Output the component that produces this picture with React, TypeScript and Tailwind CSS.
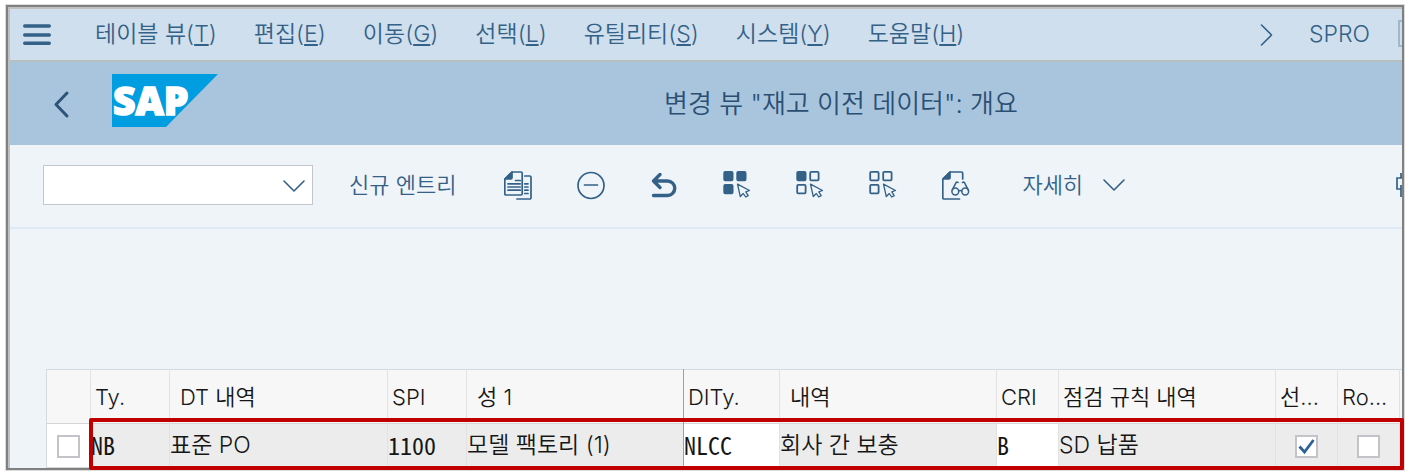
import type { ReactNode } from 'react';
import clsx from 'clsx';

const MENUS = [
  { label: '테이블 뷰', hotkey: 'T' },
  { label: '편집', hotkey: 'E' },
  { label: '이동', hotkey: 'G' },
  { label: '선택', hotkey: 'L' },
  { label: '유틸리티', hotkey: 'S' },
  { label: '시스템', hotkey: 'Y' },
  { label: '도움말', hotkey: 'H' },
];

interface Column {
  label: string;
  width: string;
  pad: string;
  divider: string;
}

const COLUMNS: Column[] = [
  { label: 'Ty.', width: 'w-[79px]', pad: 'pl-1', divider: 'border-[#e2e2e2]' },
  { label: 'DT 내역', width: 'w-[218px]', pad: 'pl-2.5', divider: 'border-[#e2e2e2]' },
  { label: 'SPI', width: 'w-[79px]', pad: 'pl-1', divider: 'border-[#e2e2e2]' },
  { label: '성 1', width: 'w-[217px]', pad: 'pl-2.5', divider: 'border-[#e2e2e2]' },
  { label: 'DITy.', width: 'w-[96px]', pad: 'pl-1', divider: 'border-[#a0a0a0]' },
  { label: '내역', width: 'w-[217px]', pad: 'pl-2.5', divider: 'border-[#e2e2e2]' },
  { label: 'CRI', width: 'w-[62px]', pad: 'pl-1', divider: 'border-[#e2e2e2]' },
  { label: '점검 규칙 내역', width: 'w-[217px]', pad: 'pl-1', divider: 'border-[#e2e2e2]' },
  { label: '선...', width: 'w-[62px]', pad: 'pl-1', divider: 'border-[#e2e2e2]' },
  { label: 'Ro...', width: 'w-[62px]', pad: 'pl-1', divider: 'border-[#e2e2e2]' },
];

function Chevron({ d, className, strokeWidth = 1.6 }: { d: string; className: string; strokeWidth?: number }) {
  return (
    <svg viewBox="0 0 22 22" className={className} fill="none" stroke="currentColor" strokeWidth={strokeWidth} strokeLinecap="round" strokeLinejoin="round">
      <path d={d} />
    </svg>
  );
}

function Logo() {
  return (
    <svg viewBox="0 0 106 53" className="mb-1.5 h-[53px] w-[106px] shrink-0 overflow-visible" role="img" aria-label="SAP">
      <path d="M0 0H106L54 53H0Z" fill="#009de0" />
      <text x="1" y="41" fill="#fff" stroke="#fff" strokeWidth="1.600" fontSize="39" fontWeight="800" fontFamily="Open Sans, sans-serif">
        SAP
      </text>
    </svg>
  );
}

function CopyIcon() {
  return (
    <>
      <path d="M8 1h9a1.2 1.2 0 0 1 1.2 1.200v20.600a1.200 1.200 0 0 1-1.200 1.200H2a1.200 1.200 0 0 1-1.200-1.200V8z" />
      <path d="M1 8 8 1v5.800a1.200 1.200 0 0 1-1.200 1.200z" fill="currentColor" />
      <path d="M11.500 9.500h4.700M4 12.800h12.200M4 16h12.200M4 19.200h12.200M20.800 5h5a1.200 1.200 0 0 1 1.200 1.200v20.600a1.200 1.200 0 0 1-1.200 1.200H13M20.800 12.800h3.200M20.800 16h3.200M20.800 19.200h3.200M20.800 22.500h3.200" />
    </>
  );
}

function MinusIcon() {
  return (
    <>
      <circle cx="14" cy="14.500" r="13" />
      <path d="M7.500 14h13" />
    </>
  );
}

function UndoIcon() {
  return <path d="M10 3.500 3.500 10 10 16.500M3.500 10h14a7 7 0 0 1 0 14.500H3.500" strokeWidth="3.400" />;
}

// filled: number of squares that are solid, in reading order
function SelectIcon({ filled }: { filled: number }) {
  const squares = [[1.2, 0.9], [14.2, 0.9], [1.2, 13.9]];
  return (
    <>
      {squares.map(([x, y], i) => (
        <rect key={i} x={x} y={y} width="8.400" height="8.400" rx="1" fill={i < filled ? 'currentColor' : 'none'} strokeWidth="1.800" />
      ))}
      <path d="M14.500 13.200 26.500 19.500 22.800 20.800 25.200 24.600 22.700 26 20.300 22.500 17.300 25.500Z" strokeWidth="1.300" />
    </>
  );
}

function DetailIcon() {
  return (
    <>
      <path d="M17.500 28H2a1.200 1.200 0 0 1-1.200-1.200V8L8 1h11.500a1.200 1.200 0 0 1 1.200 1.200V8" />
      <path d="M1 8 8 1v5.800a1.200 1.200 0 0 1-1.200 1.200z" fill="currentColor" />
      <g strokeWidth="1.500">
        <circle cx="13.300" cy="20.500" r="3.400" />
        <circle cx="23.200" cy="20.500" r="3.400" />
        <path d="M16.700 20q1.500-1 3 0M10.300 18.800l3.600-7q.9-1.200 2.200-.3M26.200 18.800l-3.600-7q-.9-1.200-2.200-.3" />
      </g>
    </>
  );
}

const TOOLS: { name: string; icon: ReactNode }[] = [
  { name: '다른 이름으로 복사', icon: <CopyIcon /> },
  { name: '삭제', icon: <MinusIcon /> },
  { name: '변경 취소', icon: <UndoIcon /> },
  { name: '전체 선택', icon: <SelectIcon filled={3} /> },
  { name: '블록 선택', icon: <SelectIcon filled={1} /> },
  { name: '전체 선택 해제', icon: <SelectIcon filled={0} /> },
  { name: '상세', icon: <DetailIcon /> },
];

function Check({ label, checked = false }: { label: string; checked?: boolean }) {
  return (
    <span className="relative inline-grid size-[23px] place-items-center align-middle">
      <input
        type="checkbox"
        aria-label={label}
        defaultChecked={checked}
        className="peer size-[23px] appearance-none border-2 border-[#c4c4c8] bg-white"
      />
      <svg
        viewBox="0 0 23 23"
        className="pointer-events-none absolute inset-0 hidden text-[#2f6294] peer-checked:block"
        fill="none"
        stroke="currentColor"
        strokeWidth="2.800"
      >
        <path d="M4.500 11.500 9.500 17 18.500 5" />
      </svg>
    </span>
  );
}

function Cell({ children, mono, editable, center, dark }: { children?: ReactNode; mono?: boolean; editable?: boolean; center?: boolean; dark?: boolean }) {
  return (
    <td
      className={clsx(
        'border-l pb-0.5',
        dark ? 'border-[#a0a0a0]' : 'border-[#e2e2e2]',
        editable ? 'bg-white' : 'bg-[#ececec]',
        center && 'text-center',
        mono ? "font-['Noto_Sans_Mono_CJK_KR','Liberation_Mono',monospace] text-2xl/8 font-normal" : 'text-[23px]/8',
      )}
    >
      {children}
    </td>
  );
}

export default function App() {
  return (
    <div className="bg-white px-1.5 py-[5px] font-['Inter','Noto_Sans_CJK_KR',sans-serif] text-[22px]/8 font-[350] text-[#346187]">
      <div className="border-2 border-[#808080] ring-1 ring-[#dcdcdc]">
        <div className="border-t-2 border-l-2 border-[#c0c0c0] bg-[#eff4f9]">
          <nav className="flex h-[53px] items-center overflow-hidden border-b-2 border-[#b8bfc3] bg-[#cfdfed] pb-0.5 pl-[13px] text-[23px]/8">
            <button aria-label="메뉴" className="mr-11 shrink-0">
              <svg viewBox="0 0 28 22" className="h-[22px] w-7" stroke="currentColor" strokeWidth="3.400" strokeLinecap="round">
                <path d="M1.700 3h24.600M1.700 12h24.600M1.700 20.300h24.600" />
              </svg>
            </button>
            <div className="flex gap-[37px]">
              {MENUS.map((m) => (
                <button key={m.hotkey} className="whitespace-nowrap">
                  {m.label}(<span className="underline">{m.hotkey}</span>)
                </button>
              ))}
            </div>
            <button aria-label="더 보기" className="ml-auto">
              <Chevron d="M6.500 2 16.500 12 6.500 22" className="size-[22px] overflow-visible" />
            </button>
            <span className="ml-8">SPRO</span>
            <span className="ml-7 h-[27px] w-1 border-2 border-r-0 border-[#9db9d0]" />
          </nav>

          <header className="flex h-[83px] items-center bg-[#a9c5de] pl-10">
            <button aria-label="뒤로" className="mr-10 text-[#2b5478]">
              <Chevron d="M17 0 6 11.500 17 23" className="size-[22px] overflow-visible" strokeWidth={3} />
            </button>
            <Logo />
            <h1 className="flex-1 pl-[62px] text-center text-[26px]/8 text-[#2b4f72]">변경 뷰 "재고 이전 데이터": 개요</h1>
          </header>

          <div className="flex h-[84px] items-center overflow-hidden border-b-2 border-[#dfe9f3] pb-0.5 pl-[33px]">
            <div className="relative h-10 w-[270px] shrink-0">
              <select aria-label="명령" className="h-10 w-full appearance-none border border-[#c3c7cb] bg-white px-2" />
              <Chevron d="M1 6 11 16 21 6" className="pointer-events-none absolute top-2.5 right-2 size-[22px]" />
            </div>
            <button className="ml-9 whitespace-nowrap">신규 엔트리</button>
            <div className="ml-12 flex gap-[45px]">
              {TOOLS.map((t) => (
                <button key={t.name} aria-label={t.name}>
                  <svg viewBox="0 0 28 29" className="h-[29px] w-7" fill="none" stroke="currentColor" strokeWidth="1.700" strokeLinecap="round" strokeLinejoin="round">
                    {t.icon}
                  </svg>
                </button>
              ))}
            </div>
            <button className="ml-[52px] flex items-center gap-5 whitespace-nowrap">
              자세히
              <Chevron d="M1 6 11 16 21 6" className="size-[22px]" />
            </button>
            <button aria-label="인쇄" className="ml-auto">
              <svg viewBox="0 0 6 26" className="h-[26px] w-1.5" fill="none" stroke="currentColor" strokeWidth="1.700">
                <path d="M6 6H1v11h4M5 1v5M5 13v12" />
              </svg>
            </button>
          </div>

          <main className="pt-[140px] pl-9">
            <div className="relative">
              <table className="w-full table-fixed border-collapse text-[#161616]">
                <thead>
                  <tr className="h-[54px] border-t border-[#d5dade] bg-[#f7f7f7]">
                    <th className="w-[44px] border-l border-[#d5dade]" aria-label="행 선택" />
                    {COLUMNS.map((c) => (
                      <th key={c.label} className={clsx('border-l text-left font-[350] whitespace-nowrap', c.width, c.pad, c.divider)}>
                        {c.label}
                      </th>
                    ))}
                    <th className="border-l border-[#e2e2e2]" />
                  </tr>
                </thead>
                <tbody>
                  <tr className="h-[44px] border-y border-[#d5d5d5]">
                    <td className="border-l border-[#d5dade] bg-white pb-0.5 text-center">
                      <Check label="행 선택" />
                    </td>
                    <Cell mono>NB</Cell>
                    <Cell>표준 PO</Cell>
                    <Cell mono>1100</Cell>
                    <Cell>모델 팩토리 (1)</Cell>
                    <Cell mono editable dark>NLCC</Cell>
                    <Cell>회사 간 보충</Cell>
                    <Cell mono editable>B</Cell>
                    <Cell>SD 납품</Cell>
                    <Cell center><Check label="선택" checked /></Cell>
                    <Cell center><Check label="Ro" /></Cell>
                    <Cell />
                  </tr>
                </tbody>
              </table>
              {/* highlight around the row being explained */}
              <div className="pointer-events-none absolute top-[49px] -right-0.5 -bottom-0.5 left-[43px] rounded-xs border-4 border-[#c00000]" />
            </div>
          </main>
        </div>
      </div>
    </div>
  );
}
